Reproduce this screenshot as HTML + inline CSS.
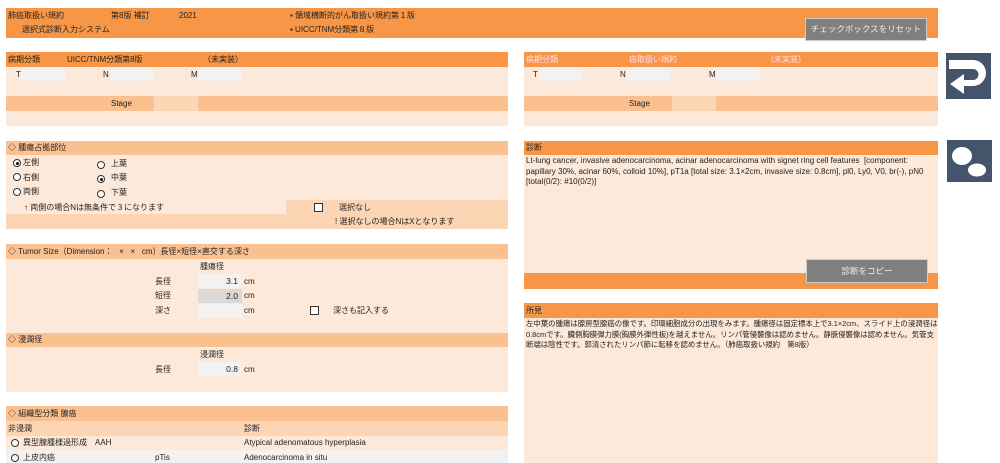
<!DOCTYPE html><html><head><meta charset="utf-8"><style>
*{margin:0;padding:0;box-sizing:border-box}
body{width:1000px;height:463px;background:#fff;position:relative;overflow:hidden;font-family:"Liberation Sans","Noto Sans CJK JP",sans-serif;font-size:8px;color:#222}
div,span{position:absolute}
.o{background:#F79646}.l{background:#FDE9D9}.m{background:#FAC090}.s{background:#FCD5B4}.g{background:#F2F2F2}
.t{white-space:nowrap;line-height:10px}
.btn{background:#808080;border:1px solid #ccc;color:#eee;text-align:center;font-size:8.5px}
.r{width:8px;height:8px;border:1px solid #333;border-radius:50%;background:#fff}
.r.on::after{content:"";position:absolute;left:1.5px;top:1.5px;width:3px;height:3px;border-radius:50%;background:#111}
.c{width:9px;height:9px;border:1px solid #333;background:#fff}
.num{text-align:right;padding-right:4px;line-height:14px;font-size:8.5px}
</style></head><body>
<div class="o" style="left:6px;top:8px;width:932px;height:30px"></div>
<span class="t" style="left:8px;top:11px">肺癌取扱い規約</span>
<span class="t" style="left:111px;top:11px">第8版 補訂</span>
<span class="t" style="left:179px;top:11px">2021</span>
<span class="t" style="left:290px;top:11px">▪ 領域横断的がん取扱い規約第１版</span>
<span class="t" style="left:22px;top:25px">選択式診断入力システム</span>
<span class="t" style="left:290px;top:25px">▪ UICC/TNM分類第８版</span>
<div class="btn" style="left:805px;top:18px;width:122px;height:23px;line-height:21px">チェックボックスをリセット</div>

<div class="o" style="left:6px;top:52px;width:502px;height:15px"></div>
<span class="t" style="left:8px;top:55px">病期分類</span><span class="t" style="left:67px;top:55px">UICC/TNM分類第8版</span><span class="t" style="left:203px;top:55px">（未実装）</span>
<div class="l" style="left:6px;top:67px;width:502px;height:29px"></div>
<span class="t" style="left:16px;top:70px">T</span><div class="g" style="left:21px;top:68px;width:44px;height:13px"></div>
<span class="t" style="left:103px;top:70px">N</span><div class="g" style="left:110px;top:68px;width:44px;height:13px"></div>
<span class="t" style="left:191px;top:70px">M</span><div class="g" style="left:198px;top:68px;width:44px;height:13px"></div>
<div class="m" style="left:6px;top:96px;width:502px;height:15px"></div>
<div class="s" style="left:154px;top:96px;width:44px;height:15px"></div>
<span class="t" style="left:111px;top:99px">Stage</span>
<div class="l" style="left:6px;top:111px;width:502px;height:15px"></div>

<div class="o" style="left:524px;top:52px;width:414px;height:15px"></div>
<span class="t" style="left:526px;top:55px;color:#fde">病期分類</span><span class="t" style="left:629px;top:55px;color:#fde">癌取扱い規約</span><span class="t" style="left:766px;top:55px;color:#fde">（未実装）</span>
<div class="l" style="left:524px;top:67px;width:414px;height:29px"></div>
<span class="t" style="left:533px;top:70px">T</span><div class="g" style="left:539px;top:68px;width:44px;height:13px"></div>
<span class="t" style="left:620px;top:70px">N</span><div class="g" style="left:627px;top:68px;width:44px;height:13px"></div>
<span class="t" style="left:709px;top:70px">M</span><div class="g" style="left:716px;top:68px;width:44px;height:13px"></div>
<div class="m" style="left:524px;top:96px;width:414px;height:15px"></div>
<div class="s" style="left:672px;top:96px;width:44px;height:15px"></div>
<span class="t" style="left:629px;top:99px">Stage</span>
<div class="l" style="left:524px;top:111px;width:414px;height:15px"></div>

<div style="left:946px;top:53px;width:45px;height:46px;background:#44546A">
<svg width="45" height="46" viewBox="0 0 45 46"><path d="M3 7 H27 A13 13 0 0 1 27 33 H18 V41 L4 31 L18 21 V27 H27 A5 5 0 0 0 27 16 H3 Z" fill="#fff"/></svg></div>
<div style="left:947px;top:140px;width:45px;height:42px;background:#44546A">
<svg width="45" height="42"><ellipse cx="15" cy="16" rx="10" ry="9" fill="#fff"/><ellipse cx="30" cy="30" rx="9" ry="6.5" fill="#fff"/></svg></div>

<div class="m" style="left:6px;top:141px;width:502px;height:14px"></div>
<span class="t" style="left:8px;top:143px">◇ 腫瘍占拠部位</span>
<div class="l" style="left:6px;top:155px;width:502px;height:59px"></div>
<div class="s" style="left:286px;top:200px;width:222px;height:14px"></div>
<div class="s" style="left:6px;top:214px;width:502px;height:15px"></div>
<div class="r on" style="left:13px;top:159px"></div><span class="t" style="left:23px;top:158px">左側</span>
<div class="r" style="left:13px;top:173px"></div><span class="t" style="left:23px;top:173px">右側</span>
<div class="r" style="left:13px;top:188px"></div><span class="t" style="left:23px;top:187px">両側</span>
<div class="r" style="left:97px;top:161px"></div><span class="t" style="left:111px;top:159px">上葉</span>
<div class="r on" style="left:97px;top:175px"></div><span class="t" style="left:111px;top:173px">中葉</span>
<div class="r" style="left:97px;top:190px"></div><span class="t" style="left:111px;top:188px">下葉</span>
<span class="t" style="left:24px;top:203px">↑ 両側の場合Nは無条件で３になります</span>
<div class="c" style="left:314px;top:203px"></div><span class="t" style="left:339px;top:203px">選択なし</span>
<span class="t" style="left:335px;top:217px">! 選択なしの場合NはXとなります</span>

<div class="o" style="left:524px;top:141px;width:414px;height:14px"></div>
<span class="t" style="left:526px;top:143px">診断</span>
<div class="l" style="left:524px;top:155px;width:414px;height:118px"></div>
<div style="left:526px;top:156px;width:412px;line-height:10.5px;font-size:8px">Lt-lung cancer, invasive adenocarcinoma, acinar adenocarcinoma with signet ring cell features &nbsp;[component: papillary 30%, acinar 60%, colloid 10%], pT1a [total size: 3.1×2cm, invasive size: 0.8cm], pl0, Ly0, V0, br(-), pN0 [total(0/2): #10(0/2)]</div>
<div class="o" style="left:524px;top:273px;width:414px;height:16px"></div>
<div class="btn" style="left:806px;top:259px;width:122px;height:24px;line-height:22px">診断をコピー</div>

<div class="o" style="left:524px;top:303px;width:414px;height:15px"></div>
<span class="t" style="left:526px;top:306px">所見</span>
<div class="l" style="left:524px;top:318px;width:414px;height:145px"></div>
<div style="left:526px;top:319px;width:412px;line-height:10.5px;font-size:7.4px">左中葉の腫瘍は腺房型腺癌の像です。印環細胞成分の出現をみます。腫瘍径は固定標本上で3.1×2cm、スライド上の浸潤径は0.8cmです。臓側胸膜弾力膜(胸膜外弾性板)を越えません。リンパ管侵襲像は認めません。静脈侵襲像は認めません。気管支断端は陰性です。郭清されたリンパ節に転移を認めません。（肺癌取扱い規約　第8版）</div>

<div class="m" style="left:6px;top:244px;width:502px;height:15px"></div>
<span class="t" style="left:8px;top:247px">◇ Tumor Size（Dimension： &nbsp;&nbsp;× &nbsp;&nbsp;× &nbsp;&nbsp;cm）長径×短径×直交する深さ</span>
<div class="l" style="left:6px;top:259px;width:502px;height:74px"></div>
<span class="t" style="left:200px;top:262px">腫瘍径</span>
<span class="t" style="left:155px;top:277px">長径</span><div class="g num" style="left:198px;top:274px;width:44px;height:14px">3.1</div><span class="t" style="left:244px;top:277px">cm</span>
<span class="t" style="left:155px;top:291px">短径</span><div class="num" style="left:198px;top:289px;width:44px;height:14px;background:#D9D9D9">2.0</div><span class="t" style="left:244px;top:291px">cm</span>
<span class="t" style="left:155px;top:306px">深さ</span><div class="g" style="left:198px;top:304px;width:44px;height:14px"></div><span class="t" style="left:244px;top:306px">cm</span>
<div class="c" style="left:310px;top:306px"></div><span class="t" style="left:333px;top:306px">深さも記入する</span>

<div class="m" style="left:6px;top:333px;width:502px;height:14px"></div>
<span class="t" style="left:8px;top:335px">◇ 浸潤径</span>
<div class="l" style="left:6px;top:347px;width:502px;height:45px"></div>
<span class="t" style="left:200px;top:350px">浸潤径</span>
<span class="t" style="left:155px;top:365px">長径</span><div class="g num" style="left:198px;top:362px;width:44px;height:15px">0.8</div><span class="t" style="left:244px;top:365px">cm</span>

<div class="m" style="left:6px;top:406px;width:502px;height:15px"></div>
<span class="t" style="left:8px;top:409px">◇ 組織型分類 腺癌</span>
<div class="s" style="left:6px;top:421px;width:502px;height:15px"></div>
<span class="t" style="left:8px;top:424px">非浸潤</span><span class="t" style="left:244px;top:424px">診断</span>
<div class="l" style="left:6px;top:436px;width:502px;height:14px"></div>
<div class="r" style="left:11px;top:439px"></div><span class="t" style="left:23px;top:438px">異型腺腫様過形成　AAH</span><span class="t" style="left:244px;top:438px">Atypical adenomatous hyperplasia</span>
<div class="g" style="left:6px;top:450px;width:502px;height:13px"></div>
<div class="r" style="left:11px;top:454px"></div><span class="t" style="left:23px;top:453px">上皮内癌</span><span class="t" style="left:155px;top:453px">pTis</span><span class="t" style="left:244px;top:453px">Adenocarcinoma in situ</span>
</body></html>
